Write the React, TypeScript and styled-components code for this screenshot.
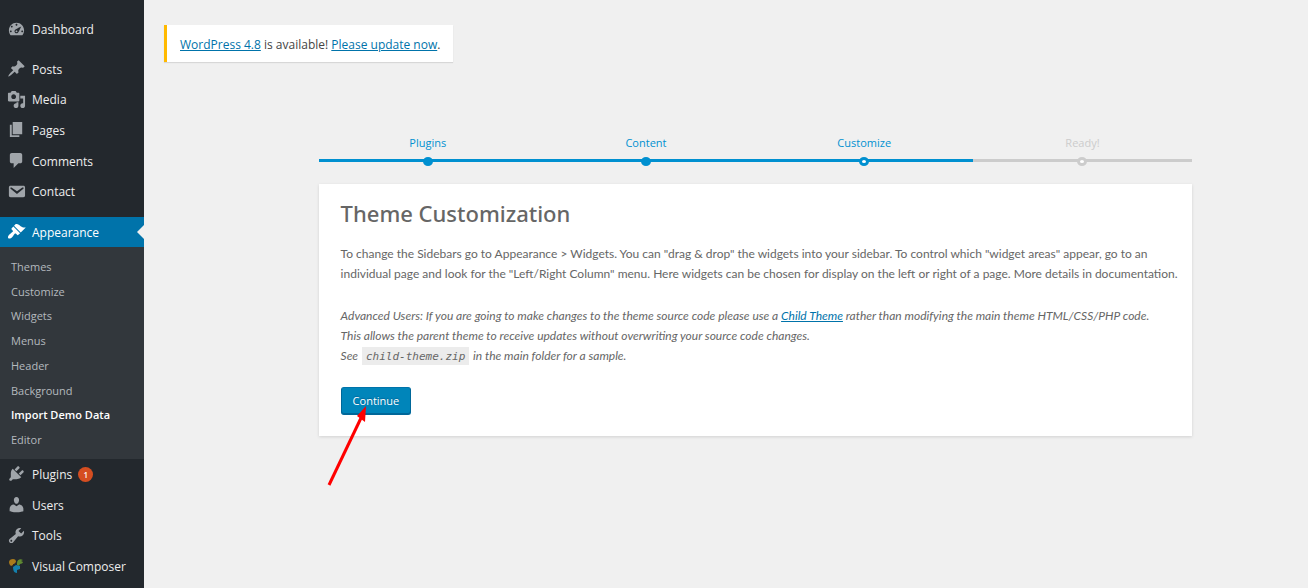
import React from "react";
import styled, { createGlobalStyle, css } from "styled-components";

const GlobalStyle = createGlobalStyle`
  *, *::before, *::after { box-sizing: border-box; }
  body {
    margin: 0;
    background: #f0f0f0;
    color: #444;
    font-family: "Open Sans", "Noto Sans", sans-serif;
    font-size: 12px;
  }
`;

const Page = styled.div`
  display: flex;
  align-items: stretch;
  min-height: 100vh;
`;

const Sidebar = styled.nav`
  flex: 0 0 144px;
  padding-top: 14px;
  background: #23282d;
`;

const MenuGroup = styled.ul<{ $height: number; $gap?: number }>`
  display: grid;
  grid-auto-rows: 1fr;
  height: ${(p) => p.$height}px;
  margin: 0 0 ${(p) => p.$gap ?? 0}px;
  padding: 0;
  list-style: none;
`;

const MenuItem = styled.li`
  display: grid;
`;

const MenuLink = styled.a<{ $current?: boolean }>`
  position: relative;
  display: flex;
  align-items: center;
  gap: 6px;
  padding-left: 7px;
  color: #eee;
  font-size: 12px;
  line-height: 18px;
  text-decoration: none;
  white-space: nowrap;

  svg {
    flex: none;
    margin-bottom: 1px;
    color: #a0a5aa;
  }

  ${(p) =>
    p.$current &&
    css`
      background: #0073aa;
      color: #fff;

      svg {
        color: #fff;
      }

      &::after {
        content: "";
        position: absolute;
        top: 50%;
        right: 0;
        margin-top: -7px;
        border: 7px solid transparent;
        border-left-width: 0;
        border-right-color: #f0f0f0;
      }
    `}
`;

const MenuLabel = styled.span`
  padding-top: 1px;
`;

const Badge = styled.span`
  display: grid;
  place-items: center;
  width: 15px;
  height: 15px;
  border-radius: 50%;
  background: #d54e21;
  color: #fff;
  font-size: 8px;
  font-weight: 600;
  line-height: 15px;
`;

const Submenu = styled.ul`
  display: grid;
  grid-auto-rows: 1fr;
  height: 212px;
  margin: 0;
  padding: 7px 0;
  background: #32373c;
  list-style: none;
`;

const SubmenuLink = styled.a<{ $current?: boolean }>`
  display: flex;
  align-items: center;
  height: 100%;
  padding-left: 11px;
  color: ${(p) => (p.$current ? "#fff" : "#b4b9be")};
  font-size: 11px;
  font-weight: ${(p) => (p.$current ? 600 : 400)};
  text-decoration: none;
`;

const Main = styled.main`
  flex: 1;
  min-width: 0;
  padding-top: 25px;
`;

const Notice = styled.div`
  width: fit-content;
  margin-left: 20px;
  padding: 10px 13px 8px;
  border-left: 3px solid #ffb900;
  background: #fff;
  box-shadow: 0 1px 1px rgba(0, 0, 0, 0.1);
  line-height: 19px;
`;

const TextLink = styled.a`
  color: #0073aa;
  text-decoration: underline;
`;

const Wizard = styled.div`
  width: 75%;
  margin: 71px 0 0 15%;
`;

const Steps = styled.ol`
  display: flex;
  margin: 0 0 18px;
  padding: 0;
  list-style: none;
`;

type StepState = "done" | "active" | "todo";

const stepColor = (state: StepState) => (state === "todo" ? "#ccc" : "#0090d0");

const Step = styled.li<{ $state: StepState }>`
  display: flex;
  flex: 1;
  flex-direction: column;
  align-items: center;
  height: 33px;
  color: ${(p) => stepColor(p.$state)};
  font-size: 11px;
  line-height: 20px;
`;

const StepTrack = styled.span<{ $state: StepState }>`
  display: flex;
  justify-content: center;
  width: 100%;
  height: 3px;
  margin-top: 6px;
  background: ${(p) => stepColor(p.$state)};

  &::after {
    content: "";
    flex: none;
    width: 10px;
    height: 9px;
    margin-top: -2px;
    border: 3px solid ${(p) => stepColor(p.$state)};
    border-radius: 50%;
    background: ${(p) => (p.$state === "done" ? "#0090d0" : "#fff")};
  }
`;

const Card = styled.section`
  padding: 18px 12px 21px 22px;
  background: #fff;
  box-shadow: 0 1px 3px rgba(0, 0, 0, 0.13);
  color: #666;
  line-height: 20px;
`;

const Title = styled.h1`
  margin: 0 0 20px;
  color: #666;
  font-family: "Noto Sans", "Open Sans", sans-serif;
  font-size: 22px;
  font-weight: 500;
  line-height: 22px;
`;

const Paragraph = styled.p`
  margin: 0 0 22px;
  font-family: Lato, "Open Sans", sans-serif;
`;

const Note = styled.p`
  margin: 0 0 21px;
  font-family: Lato, "Open Sans", sans-serif;
  font-style: italic;
`;

const Code = styled.code`
  margin: 0 1px;
  padding: 3px 4px 2px;
  background: #ececec;
  font-family: "DejaVu Sans Mono", "Liberation Mono", monospace;
  font-size: 11px;
  line-height: 14px;
`;

const Action = styled.div`
  position: relative;
  width: fit-content;
`;

const PrimaryButton = styled.button`
  display: block;
  height: 28px;
  padding: 0 11px;
  border: 1px solid #006799;
  border-top-color: #0073aa;
  border-radius: 3px;
  background: #0085ba;
  box-shadow: inset 0 -1px 0 #006799;
  color: #fff;
  font-family: inherit;
  font-size: 11px;
  line-height: 24px;
  text-shadow: 0 -1px 1px #006799;
  cursor: pointer;
`;

const Arrow = styled.svg`
  position: absolute;
  top: 18px;
  left: -14px;
  pointer-events: none;
`;

const icons = {
  dashboard:
    "M3.76 17h12.48A7.998 7.998 0 0 0 18 12c0-4.41-3.58-8-8-8s-8 3.58-8 8c0 1.9.66 3.64 1.76 5zM9 6c0-.55.45-1 1-1s1 .45 1 1c0 .56-.45 1-1 1s-1-.44-1-1zM4 8c0-.55.45-1 1-1s1 .45 1 1c0 .56-.45 1-1 1s-1-.44-1-1zm4.52 3.4c.84-.83 6.51-3.5 6.51-3.5s-2.66 5.68-3.49 6.51c-.84.84-2.18.84-3.02 0-.83-.83-.83-2.18 0-3.01zM3 13c0-.55.45-1 1-1s1 .45 1 1c0 .56-.45 1-1 1s-1-.44-1-1zm6 0c0 .55.45 1 1 1s1-.45 1-1c0-.56-.45-1-1-1s-1 .44-1 1zm6 0c0-.55.45-1 1-1s1 .45 1 1c0 .56-.45 1-1 1s-1-.44-1-1z",
  posts:
    "M10.44 3.02l1.82-1.82 6.36 6.35-1.83 1.82c-1.05-.68-2.48-.57-3.41.36l-.75.75c-.92.93-1.04 2.35-.35 3.41l-1.83 1.82-2.41-2.41-2.8 2.79c-.42.42-3.38 2.71-3.8 2.29s1.86-3.39 2.28-3.81l2.79-2.79L4.1 9.36l1.83-1.82c1.05.69 2.48.57 3.4-.36l.75-.75c.93-.92 1.05-2.35.36-3.41z",
  media:
    "M13 11V4c0-.55-.45-1-1-1h-1.67L9 1H5L3.67 3H2c-.55 0-1 .45-1 1v7c0 .55.45 1 1 1h10c.55 0 1-.45 1-1zM7 4.5c1.38 0 2.5 1.12 2.5 2.5S8.38 9.5 7 9.5 4.5 8.38 4.5 7 5.62 4.5 7 4.5zM14 6h5v10.5c0 1.38-1.12 2.5-2.5 2.5S14 17.88 14 16.5s1.12-2.5 2.5-2.5c.17 0 .34.02.5.05V9h-3V6zm-4 8.05V13h2v3.5c0 1.38-1.12 2.5-2.5 2.5S7 17.88 7 16.5 8.12 14 9.5 14c.17 0 .34.02.5.05z",
  pages: "M6 15V2h10v13H6zm-1 1h8v2H3V5h2v11z",
  comments:
    "M5 2h9c1.1 0 2 .9 2 2v7c0 1.1-.9 2-2 2h-2l-5 5v-5H5c-1.1 0-2-.9-2-2V4c0-1.1.9-2 2-2z",
  contact:
    "M3.87 4h13.25C18.37 4 19 4.59 19 5.79v8.42c0 1.19-.63 1.79-1.88 1.79H3.87c-1.25 0-1.88-.6-1.88-1.79V5.79c0-1.2.63-1.79 1.88-1.79zm6.62 8.6l6.74-5.53c.24-.2.43-.66.13-1.07-.29-.41-.82-.42-1.17-.17l-5.7 3.86L4.8 5.83c-.35-.25-.88-.24-1.17.17-.3.41-.11.87.13 1.07z",
  appearance:
    "M14.48 11.06L7.41 3.99l1.5-1.5c.5-.56 2.3-.47 3.51.32 1.21.8 1.43 1.28 2.91 2.1 1.18.64 2.45 1.26 4.45.85zm-.71.71L6.7 4.7 4.93 6.47c-.39.39-.39 1.02 0 1.41l1.06 1.06c.39.39.39 1.03 0 1.42-.6.6-1.43 1.11-2.21 1.69-.35.26-.7.53-1.01.84C1.43 14.23.4 16.08 1.4 17.07c.99 1 2.84-.03 4.18-1.36.31-.31.58-.66.85-1.02.57-.78 1.08-1.61 1.69-2.21.39-.39 1.02-.39 1.41 0l1.06 1.06c.39.39 1.02.39 1.41 0z",
  plugins:
    "M13.11 4.36L9.87 7.6 8 5.73l3.24-3.24c.35-.34 1.05-.2 1.56.32.52.51.66 1.21.31 1.55zm-8 1.77l.91-1.12 9.01 9.01-1.19.84c-.71.71-2.63 1.16-3.82 1.16H6.14L4.9 17.26c-.59.59-1.54.59-2.12 0-.59-.58-.59-1.53 0-2.12l1.24-1.24v-3.88c0-1.13.4-3.19 1.09-3.89zm7.26 3.97l3.24-3.24c.34-.35 1.04-.21 1.55.31.52.51.66 1.21.31 1.55l-3.24 3.25z",
  users:
    "M10 9.25c-2.27 0-2.73-3.44-2.73-3.44C7 4.02 7.82 2 9.97 2c2.16 0 2.98 2.02 2.71 3.81 0 0-.41 3.44-2.68 3.44zm0 2.57L12.72 10c2.39 0 4.52 2.33 4.52 4.53v2.49s-3.65 1.13-7.24 1.13c-3.65 0-7.24-1.13-7.24-1.13v-2.49c0-2.25 1.94-4.48 4.47-4.48z",
  tools:
    "M16.68 9.77c-1.34 1.34-3.3 1.67-4.95.99l-5.41 6.52c-.99.99-2.59.99-3.58 0s-.99-2.59 0-3.57l6.52-5.42c-.68-1.65-.35-3.61.99-4.95 1.28-1.28 3.12-1.62 4.72-1.06l-2.89 2.89 2.82 2.82 2.86-2.87c.53 1.58.18 3.39-1.08 4.65zM3.81 16.21c.4.39 1.04.39 1.43 0 .4-.4.4-1.04 0-1.43-.39-.4-1.03-.4-1.43 0-.39.39-.39 1.03 0 1.43z",
};

type IconName = keyof typeof icons;

const Icon = ({ name }: { name: IconName }) => (
  <svg width="19" height="19" viewBox="0 0 20 20" fill="currentColor" aria-hidden="true">
    <path d={icons[name]} />
  </svg>
);

const ComposerLogo = () => (
  <svg width="19" height="19" viewBox="0 0 19 19" aria-hidden="true">
    <path d="M2 5c0-2 2-3 4-3 2 0 3 1 3 3L7 7H6v1L4 9C3 8 2 7 2 5z" fill="#a97b1c" />
    <path d="M16 3c-3-2-6 0-6 3v2l2 1 1-2c1 0 3-1 3-2l-2-1z" fill="#5f8a32" />
    <path d="M6 10l3-2 4 1v3l-3 1v3c-3 0-4-3-4-6z" fill="#1480ad" />
  </svg>
);

const Entry = ({
  icon,
  label,
  current,
  children,
}: {
  icon?: IconName;
  label: string;
  current?: boolean;
  children?: React.ReactNode;
}) => (
  <MenuItem>
    <MenuLink href="#" $current={current} aria-current={current ? "true" : undefined}>
      {icon ? <Icon name={icon} /> : <ComposerLogo />}
      <MenuLabel>{label}</MenuLabel>
      {children}
    </MenuLink>
  </MenuItem>
);

const submenu = [
  "Themes",
  "Customize",
  "Widgets",
  "Menus",
  "Header",
  "Background",
  "Import Demo Data",
  "Editor",
];

const steps: { label: string; state: StepState }[] = [
  { label: "Plugins", state: "done" },
  { label: "Content", state: "done" },
  { label: "Customize", state: "active" },
  { label: "Ready!", state: "todo" },
];

export default function App() {
  return (
    <Page>
      <GlobalStyle />
      <Sidebar aria-label="Admin menu">
        <MenuGroup $height={30} $gap={10}>
          <Entry icon="dashboard" label="Dashboard" />
        </MenuGroup>
        <MenuGroup $height={153} $gap={10}>
          <Entry icon="posts" label="Posts" />
          <Entry icon="media" label="Media" />
          <Entry icon="pages" label="Pages" />
          <Entry icon="comments" label="Comments" />
          <Entry icon="contact" label="Contact" />
        </MenuGroup>
        <MenuGroup $height={30}>
          <Entry icon="appearance" label="Appearance" current />
        </MenuGroup>
        <Submenu>
          {submenu.map((label) => (
            <li key={label}>
              <SubmenuLink href="#" $current={label === "Import Demo Data"}>
                {label}
              </SubmenuLink>
            </li>
          ))}
        </Submenu>
        <MenuGroup $height={123}>
          <Entry icon="plugins" label="Plugins">
            <Badge>1</Badge>
          </Entry>
          <Entry icon="users" label="Users" />
          <Entry icon="tools" label="Tools" />
          <Entry label="Visual Composer" />
        </MenuGroup>
      </Sidebar>
      <Main>
        <Notice>
          <TextLink href="#">WordPress 4.8</TextLink> is available!{" "}
          <TextLink href="#">Please update now</TextLink>.
        </Notice>
        <Wizard>
          <Steps>
            {steps.map(({ label, state }) => (
              <Step key={label} $state={state} aria-current={state === "active" ? "step" : undefined}>
                {label}
                <StepTrack $state={state} />
              </Step>
            ))}
          </Steps>
          <Card>
            <Title>Theme Customization</Title>
            <Paragraph>
              To change the Sidebars go to Appearance &gt; Widgets. You can "drag &amp; drop" the
              widgets into your sidebar. To control which "widget areas" appear, go to an
              <br />
              individual page and look for the "Left/Right Column" menu. Here widgets can be chosen
              for display on the left or right of a page. More details in documentation.
            </Paragraph>
            <Note>
              Advanced Users: If you are going to make changes to the theme source code please use a{" "}
              <TextLink href="#">Child Theme</TextLink> rather than modifying the main theme
              HTML/CSS/PHP code.
              <br />
              This allows the parent theme to receive updates without overwriting your source code
              changes.
              <br />
              See <Code>child-theme.zip</Code> in the main folder for a sample.
            </Note>
            <Action>
              <PrimaryButton type="button">Continue</PrimaryButton>
              <Arrow width="44" height="84" viewBox="0 0 44 84" aria-hidden="true">
                <path d="M2 80L34 13" stroke="#f00" strokeWidth="3" fill="none" />
                <path d="M39 1L38 17L30 11z" fill="#f00" />
              </Arrow>
            </Action>
          </Card>
        </Wizard>
      </Main>
    </Page>
  );
}
